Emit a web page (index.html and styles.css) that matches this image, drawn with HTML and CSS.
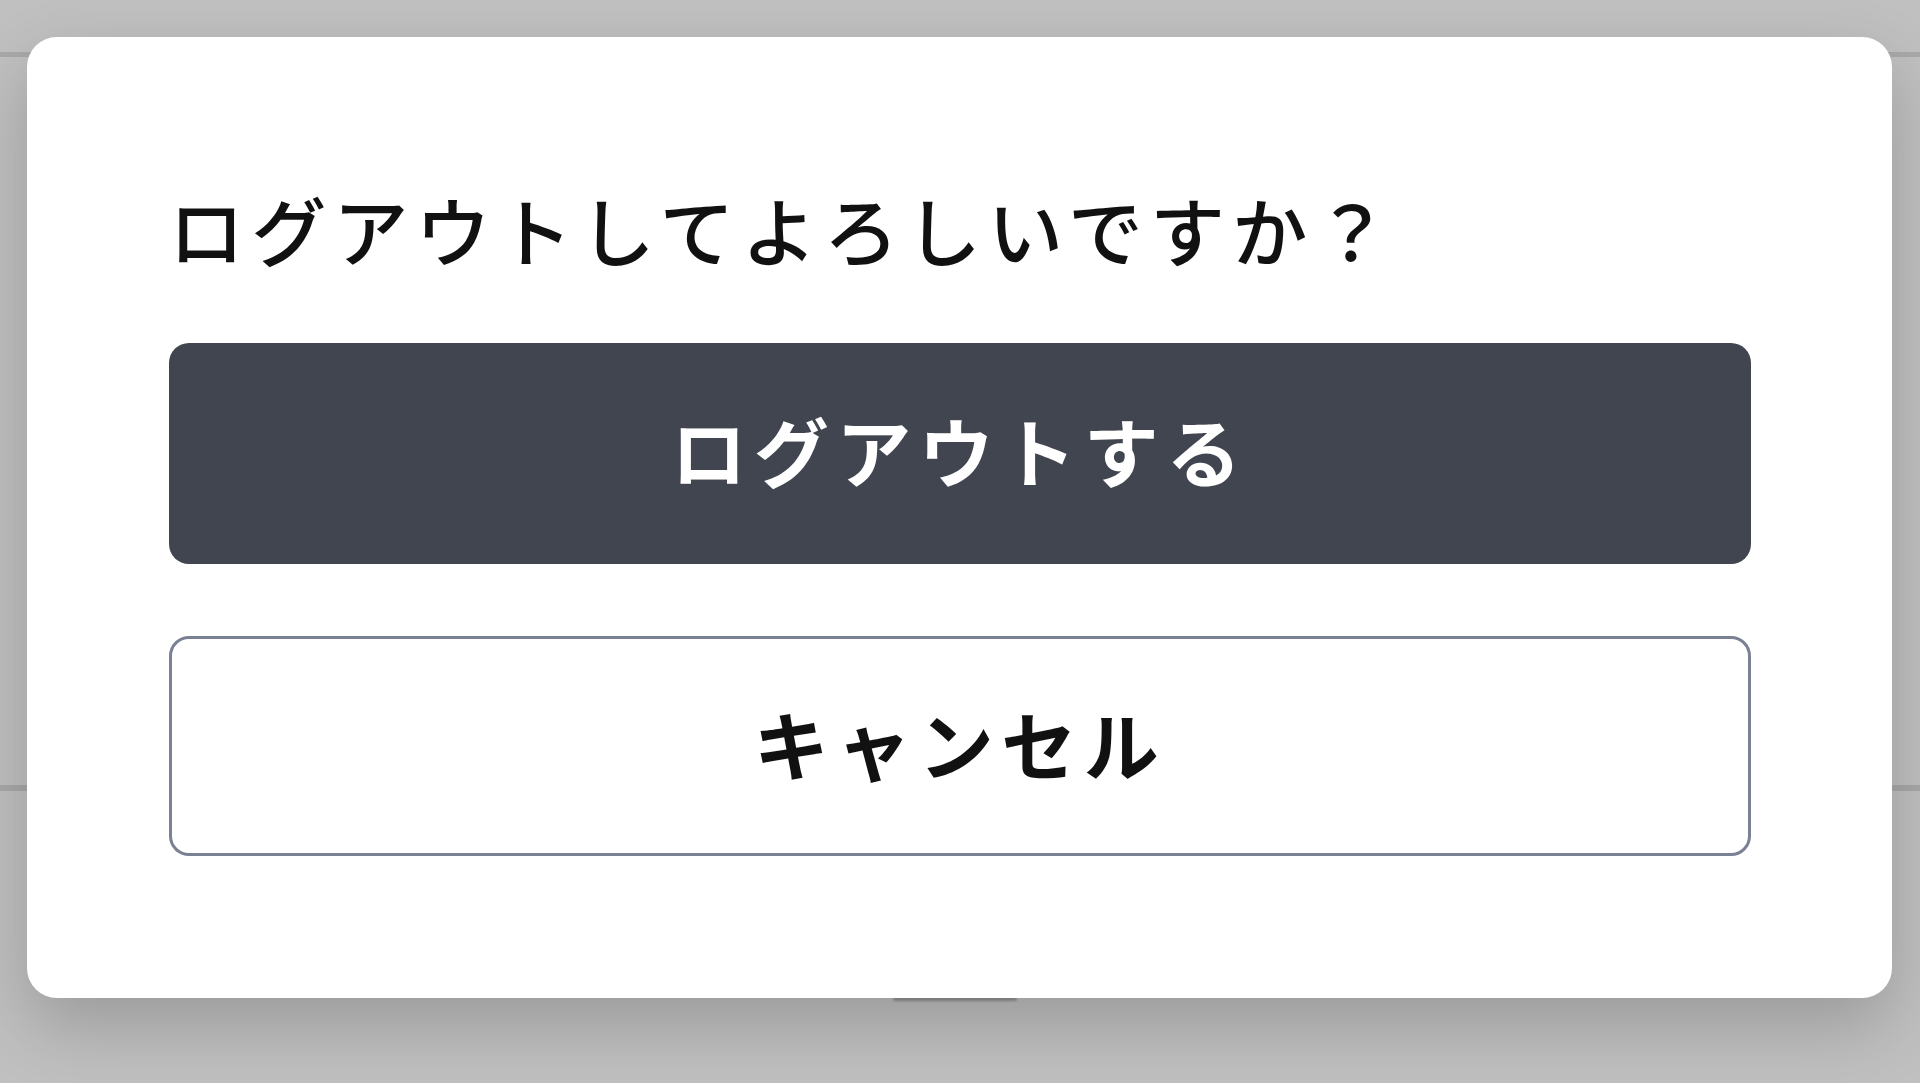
FILE: index.html
```html
<!DOCTYPE html>
<html lang="ja">

<head>
<meta charset="utf-8">
<link rel="stylesheet" href="styles.css">
</head>

<body>

<div class="page">
    <div class="page-header"></div>
    <div class="page-body"></div>
    <div class="page-footer">
        <div class="page-footer-button"></div>
    </div>
</div>

<div class="overlay">
    <div class="dialog">
        <p class="dialog-title">ログアウトしてよろしいですか？</p>
        <button class="btn btn-primary" type="button">ログアウトする</button>
        <button class="btn btn-outline" type="button">キャンセル</button>
    </div>
</div>

</body>
</html>
```

FILE: styles.css
```css
html, body {
    margin: 0;
    padding: 0;
    height: 100%;
}

body {
    background-color: #c0c0c0;
    font-family: "Noto Sans CJK JP", "Noto Sans", sans-serif;
    overflow: hidden;
}

/* page behind the dialog (already dimmed) */
.page {
    display: flex;
    flex-direction: column;
    height: 100%;
}

.page-header {
    height: 52px;
    border-bottom: 5px solid #a9a9a9;
}

.page-body {
    height: 728px;
}

.page-footer {
    flex: 1;
    border-top: 6px solid #a9a9a9;
    display: flex;
    justify-content: center;
}

.page-footer-button {
    width: 124px;
    height: 4px;
    margin-top: 206px;
    margin-left: -10px;
    border-radius: 2px;
    background-color: #8e9190;
    filter: blur(1px);
}

/* dialog */
.overlay {
    position: fixed;
    top: 0;
    left: 0;
    right: 0;
    bottom: 0;
    display: flex;
    align-items: flex-start;
    padding: 37px 28px 0 27px;
}

.dialog {
    flex: 1;
    display: flex;
    flex-direction: column;
    padding: 142px 141px 142px 142px;
    background-color: #ffffff;
    border-radius: 30px;
    box-shadow: 0 28px 70px rgba(0, 0, 0, 0.2);
}

.dialog-title {
    margin: 0 0 64px 0;
    font-size: 75px;
    line-height: 100px;
    letter-spacing: 0.095em;
    font-weight: 500;
    color: #111111;
}

.btn {
    display: flex;
    align-items: center;
    justify-content: center;
    width: 100%;
    margin: 0;
    padding: 0 0 8px 0;
    font-family: "Noto Sans CJK JP", "Noto Sans", sans-serif;
    font-size: 75px;
    font-weight: 700;
    letter-spacing: 0.1em;
    border-radius: 20px;
    cursor: pointer;
}

.btn-primary {
    height: 221px;
    border: none;
    background-color: #41454f;
    color: #ffffff;
}

.btn-outline {
    height: 220px;
    margin-top: 72px;
    border: 3.5px solid #7b8194;
    background-color: #ffffff;
    color: #111111;
}
```
